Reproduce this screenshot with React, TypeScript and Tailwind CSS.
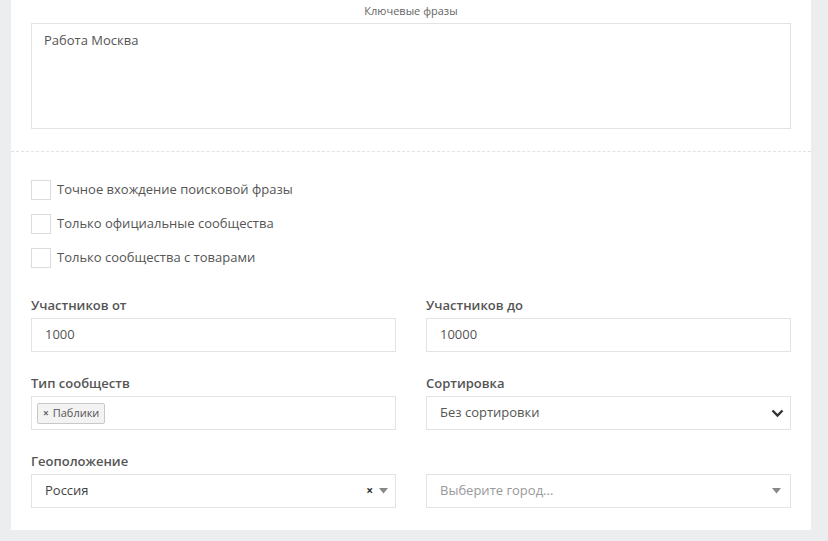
import React from 'react';

const font = { fontFamily: '"Open Sans", "Liberation Sans", sans-serif' };

function Label({ children }: { children: React.ReactNode }) {
  return <div className="text-[13px] leading-[18px] font-semibold text-[#555] mb-[4px]">{children}</div>;
}

function TextBox({ value }: { value: string }) {
  return (
    <div className="h-[34px] border border-[#e3e3e3] bg-white flex items-center px-[13px] text-[13px] text-[#555]">
      {value}
    </div>
  );
}

function Caret() {
  return (
    <svg width="9" height="6" viewBox="0 0 9 6" className="shrink-0">
      <path d="M0 0 L9 0 L4.5 5.5 Z" fill="#888" />
    </svg>
  );
}

export default function App() {
  const checks = ['Точное вхождение поисковой фразы', 'Только официальные сообщества', 'Только сообщества с товарами'];

  return (
    <div className="w-[828px] h-[541px] bg-[#ebedef] pl-[11px] pr-[17px] overflow-hidden" style={font}>
      <div className="bg-white">
        <div className="px-[20px] pt-[4px]">
          <div className="text-center text-[11px] leading-[14px] text-[#666]">Ключевые фразы</div>
          <div className="mt-[5px] h-[106px] border border-[#e3e3e3] px-[12px] py-[7px] text-[13px] leading-[18px] text-[#555]">
            Работа Москва
          </div>
        </div>
        <div className="mt-[22px] border-t border-dashed border-[#e2e2e2]"></div>
        <div className="px-[20px] pt-[28px] pb-[22px]">
          <div className="flex flex-col gap-[14px]">
            {checks.map((c) => (
              <div key={c} className="flex items-center gap-[6px]">
                <div className="w-[20px] h-[20px] border border-[#dcdcdc] bg-white"></div>
                <span className="text-[13px] text-[#555]">{c}</span>
              </div>
            ))}
          </div>

          <div className="mt-[28px] grid grid-cols-2 gap-x-[30px] gap-y-[22px]">
            <div>
              <Label>Участников от</Label>
              <TextBox value="1000" />
            </div>
            <div>
              <Label>Участников до</Label>
              <TextBox value="10000" />
            </div>
            <div>
              <Label>Тип сообществ</Label>
              <div className="h-[34px] border border-[#e3e3e3] bg-white flex items-center px-[5px]">
                <div className="h-[21px] border border-[#c8c8c8] rounded-[2px] bg-[#f3f3f3] flex items-center px-[5px] gap-[4px] text-[11px] text-[#555]">
                  <span className="text-[10px] font-bold text-[#666]">×</span>
                  <span>Паблики</span>
                </div>
              </div>
            </div>
            <div>
              <Label>Сортировка</Label>
              <div className="h-[34px] border border-[#e3e3e3] bg-white flex items-center justify-between pl-[13px] pr-[6px] text-[13px] text-[#555]">
                <span>Без сортировки</span>
                <svg width="13" height="9" viewBox="0 0 13 9">
                  <path d="M1.5 1.5 L6.5 6.5 L11.5 1.5" fill="none" stroke="#333" strokeWidth="2.4" />
                </svg>
              </div>
            </div>
            <div>
              <Label>Геоположение</Label>
              <div className="h-[34px] border border-[#e3e3e3] bg-white flex items-center justify-between pl-[13px] pr-[7px] text-[13px] text-[#444]">
                <span>Россия</span>
                <div className="flex items-center gap-[6px]">
                  <span className="text-[12px] font-bold text-[#333]">×</span>
                  <Caret />
                </div>
              </div>
            </div>
            <div>
              <div className="h-[18px] mb-[4px]"></div>
              <div className="h-[34px] border border-[#e3e3e3] bg-white flex items-center justify-between pl-[13px] pr-[9px] text-[13px] text-[#999]">
                <span>Выберите город...</span>
                <Caret />
              </div>
            </div>
          </div>
        </div>
      </div>
    </div>
  );
}
